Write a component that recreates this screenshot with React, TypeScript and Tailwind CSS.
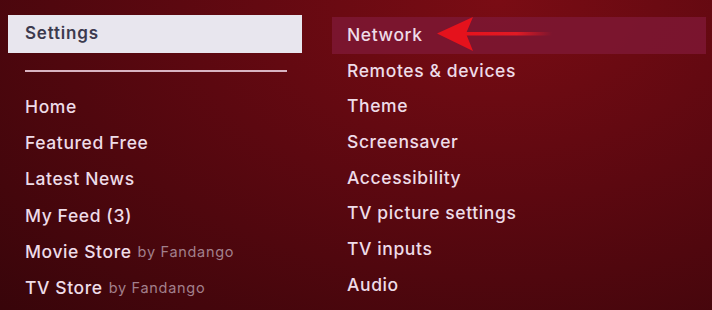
import React from "react";

const leftItems = [
  { label: "Home" },
  { label: "Featured Free" },
  { label: "Latest News" },
  { label: "My Feed (3)" },
  { label: "Movie Store", by: "by Fandango" },
  { label: "TV Store", by: "by Fandango" },
];

const rightItems = [
  "Remotes & devices",
  "Theme",
  "Screensaver",
  "Accessibility",
  "TV picture settings",
  "TV inputs",
  "Audio",
];

const Arrow = () => (
  <svg
    className="absolute left-[104px] top-[-1px]"
    width="116"
    height="36"
    viewBox="0 0 116 36"
  >
    <defs>
      <linearGradient id="shaft" x1="0" x2="1" y1="0" y2="0">
        <stop offset="0" stopColor="#e5121c" />
        <stop offset="0.6" stopColor="#e01a24" />
        <stop offset="1" stopColor="#e01a24" stopOpacity="0" />
      </linearGradient>
    </defs>
    <rect x="28" y="16" width="88" height="3.5" fill="url(#shaft)" />
    <path d="M1 17.5 L37 1 L30 17.5 L37 35 Z" fill="#e5121c" />
  </svg>
);

export default function App() {
  return (
    <div
      className="w-[712px] h-[310px] overflow-hidden flex gap-[30px] pl-2 pt-[15px] bg-[radial-gradient(ellipse_at_70%_0%,#7a0c14_0%,#5c0810_45%,#38050a_100%)]"
      style={{ fontFamily: "Inter, 'Open Sans', sans-serif" }}
    >
      <div className="w-[294px] flex flex-col">
        <div className="h-[38px] bg-[#e8e6ee] flex items-center pl-[17px] text-[17px] font-semibold text-[#3c3a4e] tracking-[0.8px]">
          Settings
        </div>
        <div className="mt-[17px] ml-[17px] w-[262px] h-[2px] bg-[#d9b4c2]" />
        <div className="mt-[17px] flex flex-col">
          {leftItems.map((it) => (
            <div
              key={it.label}
              className="h-[36.2px] flex items-center pl-[17px] text-[17.5px] text-[#eedce8] font-medium tracking-[0.6px]"
            >
              {it.label}
              {it.by && (
                <span className="ml-[6px] text-[14.5px] text-[#a2808c] font-normal tracking-[0.7px]">
                  {it.by}
                </span>
              )}
            </div>
          ))}
        </div>
      </div>
      <div className="w-[374px] flex flex-col pt-[2px]">
        <div className="relative h-[37px] -mb-[1px] bg-[#7c1632]/90 flex items-center pl-[15px] pb-[1px] text-[17.5px] text-[#eedce8] font-medium tracking-[0.6px]">
          Network
          <Arrow />
        </div>
        {rightItems.map((t) => (
          <div
            key={t}
            className="h-[35.7px] flex items-center pl-[15px] text-[17.5px] text-[#eedce8] font-medium tracking-[0.6px]"
          >
            {t}
          </div>
        ))}
      </div>
    </div>
  );
}
